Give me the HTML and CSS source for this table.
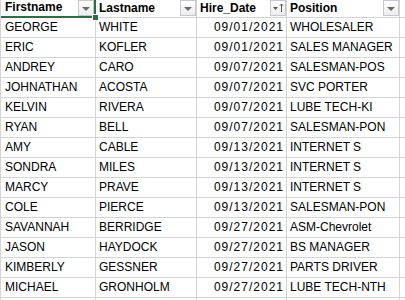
FILE: index.html
```html
<!DOCTYPE html>
<html lang="en">
<head>
    <meta charset="UTF-8">
    <title>Hires</title>
    <link rel="stylesheet" href="styles.css">
</head>
<body>

<div class="sheet">
    <div class="cell head selected">Firstname<span class="filter"><span class="arrow"></span></span><span class="handle"></span></div>
    <div class="cell head">Lastname<span class="filter"><span class="arrow"></span></span></div>
    <div class="cell head">Hire_Date<span class="filter sorted"><svg width="14" height="14" viewBox="0 0 14 14"><path d="M2 6 L7 6 L4.5 9 Z" fill="#5a5a5a"/><path d="M10.5 11 V3 M8.8 4.8 L10.5 3 L12.2 4.8" stroke="#5a5a5a" stroke-width="1" fill="none"/></svg></span></div>
    <div class="cell head">Position<span class="filter"><span class="arrow"></span></span></div>
    <div class="cell"></div>

    <div class="cell">GEORGE</div><div class="cell">WHITE</div><div class="cell date">09/01/2021</div><div class="cell">WHOLESALER</div><div class="cell"></div>
    <div class="cell">ERIC</div><div class="cell">KOFLER</div><div class="cell date">09/01/2021</div><div class="cell">SALES MANAGER</div><div class="cell"></div>
    <div class="cell">ANDREY</div><div class="cell">CARO</div><div class="cell date">09/07/2021</div><div class="cell">SALESMAN-POS</div><div class="cell"></div>
    <div class="cell">JOHNATHAN</div><div class="cell">ACOSTA</div><div class="cell date">09/07/2021</div><div class="cell">SVC PORTER</div><div class="cell"></div>
    <div class="cell">KELVIN</div><div class="cell">RIVERA</div><div class="cell date">09/07/2021</div><div class="cell">LUBE TECH-KI</div><div class="cell"></div>
    <div class="cell">RYAN</div><div class="cell">BELL</div><div class="cell date">09/07/2021</div><div class="cell">SALESMAN-PON</div><div class="cell"></div>
    <div class="cell">AMY</div><div class="cell">CABLE</div><div class="cell date">09/13/2021</div><div class="cell">INTERNET S</div><div class="cell"></div>
    <div class="cell">SONDRA</div><div class="cell">MILES</div><div class="cell date">09/13/2021</div><div class="cell">INTERNET S</div><div class="cell"></div>
    <div class="cell">MARCY</div><div class="cell">PRAVE</div><div class="cell date">09/13/2021</div><div class="cell">INTERNET S</div><div class="cell"></div>
    <div class="cell">COLE</div><div class="cell">PIERCE</div><div class="cell date">09/13/2021</div><div class="cell">SALESMAN-PON</div><div class="cell"></div>
    <div class="cell">SAVANNAH</div><div class="cell">BERRIDGE</div><div class="cell date">09/27/2021</div><div class="cell">ASM-Chevrolet</div><div class="cell"></div>
    <div class="cell">JASON</div><div class="cell">HAYDOCK</div><div class="cell date">09/27/2021</div><div class="cell">BS MANAGER</div><div class="cell"></div>
    <div class="cell">KIMBERLY</div><div class="cell">GESSNER</div><div class="cell date">09/27/2021</div><div class="cell">PARTS DRIVER</div><div class="cell"></div>
    <div class="cell">MICHAEL</div><div class="cell">GRONHOLM</div><div class="cell date">09/27/2021</div><div class="cell">LUBE TECH-NTH</div><div class="cell"></div>
    <div class="cell"></div><div class="cell"></div><div class="cell"></div><div class="cell"></div><div class="cell"></div>
</div>

</body>
</html>
```

FILE: styles.css
```css
body {
    margin: 0;
    background-color: white;
    font-family: "Liberation Sans", Arial, sans-serif;
    font-size: 12px;
    color: #000;
    overflow: hidden;
}
.sheet {
    display: grid;
    grid-template-columns: 95px 101px 90px 113px 20px;
    grid-auto-rows: 20px;
    grid-template-rows: 18px;
    border-left: 1px solid #d4d4d4;
    height: 300px;
    overflow: hidden;
}
.cell {
    position: relative;
    box-sizing: border-box;
    border-right: 1px solid #d4d4d4;
    border-bottom: 1px solid #d4d4d4;
    padding: 0 3px 3px 3px;
    display: flex;
    align-items: flex-end;
    white-space: nowrap;
    overflow: hidden;
}
.sheet .cell:nth-child(5n+1) {
    padding-left: 4px;
}
.head {
    font-weight: bold;
    padding-bottom: 2px;
    overflow: visible;
}
.date {
    justify-content: flex-end;
    letter-spacing: 1px;
    padding-right: 2px;
}
.selected {
    border-right: 2px solid #217346;
    border-bottom: 2px solid #217346;
}
.handle {
    position: absolute;
    right: -5px;
    bottom: -5px;
    width: 5px;
    height: 5px;
    background-color: #217346;
    border: 1px solid white;
    z-index: 2;
}
.filter {
    position: absolute;
    top: 0;
    right: 0;
    width: 16px;
    height: 16px;
    box-sizing: border-box;
    border: 1px solid #c5c8cc;
    background: linear-gradient(#ffffff, #ececec);
    display: flex;
    align-items: center;
    justify-content: center;
}
.arrow {
    width: 0;
    height: 0;
    border-left: 4px solid transparent;
    border-right: 4px solid transparent;
    border-top: 4px solid #6a6a6a;
    margin-top: 1px;
}
```
